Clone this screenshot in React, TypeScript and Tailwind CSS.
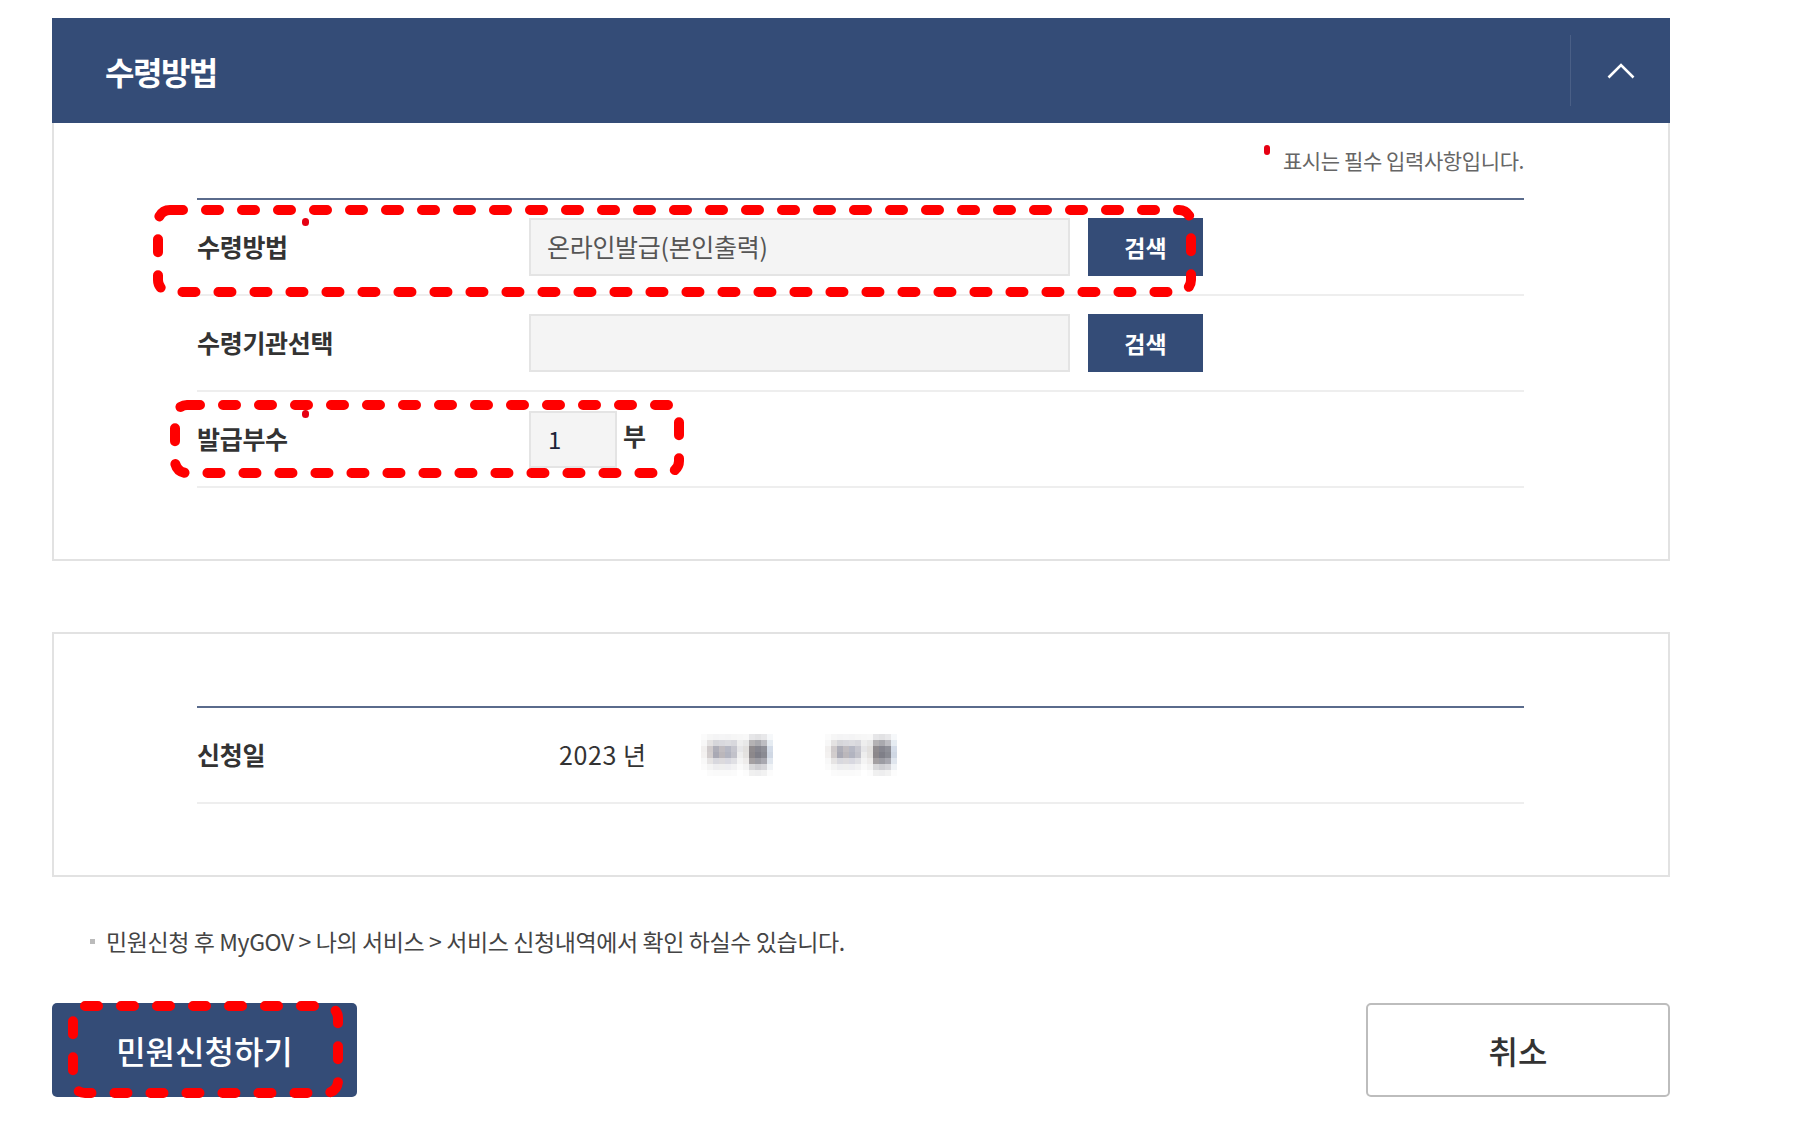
import React from "react";

function ReqDot() {
  return <span className="absolute left-[105px] top-[18px] h-[8px] w-[7px] rounded-full bg-[#e60012]" />;
}

function SearchButton() {
  return (
    <button className="ml-[18px] flex h-[58px] w-[115px] items-center justify-center bg-[#344c77] text-[23px] font-bold text-white">
      검색
    </button>
  );
}

const MOSAIC: string[][] = [
  ["bg-[#fbfbfb]", "bg-[#f6f6f6]", "bg-[#f4f4f5]", "bg-[#f5f5f6]", "bg-[#f4f4f5]", "bg-[#f6f6f6]", "bg-[#f7f7f7]", "bg-[#f8f8f8]", "bg-[#e6e6e8]", "bg-[#e2e2e4]", "bg-[#e8e8ea]", "bg-[#f6f8fa]"],
  ["bg-[#f7f7f7]", "bg-[#e4e2e2]", "bg-[#d6d6da]", "bg-[#d9d9de]", "bg-[#dcdce0]", "bg-[#d8d8dd]", "bg-[#eeeeee]", "bg-[#e8e8e8]", "bg-[#b4b2b4]", "bg-[#a9a9ae]", "bg-[#bdbdc2]", "bg-[#e6ecf2]"],
  ["bg-[#f1efee]", "bg-[#cfcacb]", "bg-[#aeaeb8]", "bg-[#c0bcc0]", "bg-[#b6b8c4]", "bg-[#c6c6ce]", "bg-[#e6e6e8]", "bg-[#e2e0de]", "bg-[#8f8b8e]", "bg-[#86868f]", "bg-[#8f9098]", "bg-[#d4dce8]"],
  ["bg-[#f3f1f0]", "bg-[#d2cdcd]", "bg-[#a9a9b4]", "bg-[#bbb7bb]", "bg-[#b2b4c0]", "bg-[#c2c2ca]", "bg-[#eeeeee]", "bg-[#e4e2e0]", "bg-[#8c888b]", "bg-[#7f7f88]", "bg-[#8a8b93]", "bg-[#d0d8e4]"],
  ["bg-[#f8f8f8]", "bg-[#e6e4e4]", "bg-[#d8d8de]", "bg-[#dcdadd]", "bg-[#d8d8e0]", "bg-[#e0e0e4]", "bg-[#f4f4f4]", "bg-[#eeeceb]", "bg-[#a4a0a2]", "bg-[#9c9ca3]", "bg-[#a8a8b0]", "bg-[#e0e6ee]"],
  ["bg-[#fbfbfb]", "bg-[#f4f4f4]", "bg-[#eeeef0]", "bg-[#efefef]", "bg-[#eeeef1]", "bg-[#f2f2f3]", "bg-[#fafafa]", "bg-[#f4f4f4]", "bg-[#d8d8da]", "bg-[#cfcfd3]", "bg-[#d6d6da]", "bg-[#f0f3f6]"],
  ["bg-[#ffffff]", "bg-[#fbfbfb]", "bg-[#fafafa]", "bg-[#fafafa]", "bg-[#fafafa]", "bg-[#fbfbfb]", "bg-[#ffffff]", "bg-[#fcfcfc]", "bg-[#f0f0f0]", "bg-[#eeeeef]", "bg-[#f2f2f2]", "bg-[#fcfcfc]"],
];

function Mosaic() {
  return (
    <div className="flex flex-col">
      {MOSAIC.map((row, r) => (
        <div key={r} className="flex">
          {row.map((c, i) => (
            <span key={i} className={`h-[6px] w-[6px] ${c}`} />
          ))}
        </div>
      ))}
    </div>
  );
}

export default function App() {
  return (
    <div className="relative min-h-[1146px] w-full bg-white font-['Noto_Sans_CJK_KR','Noto_Sans',sans-serif] text-[#333]">
      <div className="ml-[52px] w-[1618px] pt-[18px]">
        {/* Panel 1 */}
        <section>
          <div className="flex h-[105px] items-center bg-[#344c77]">
            <h2 className="flex-1 pl-[53px] text-[32px] font-bold tracking-[-1.5px] text-white">수령방법</h2>
            <div className="flex h-[71px] w-[100px] items-center justify-center border-l border-[#4a5f86]">
              <svg width="28" height="16" viewBox="0 0 28 16">
                <polyline points="1.5,14.5 14,2 26.5,14.5" fill="none" stroke="white" strokeWidth="2.6" />
              </svg>
            </div>
          </div>
          <div className="border-x-2 border-b-2 border-[#e2e2e2] pb-[71px] pl-[143px] pr-[144px] pt-[26px]">
            <div className="mb-[25px] flex h-[24px] items-center justify-end">
              <span className="mr-[13px] h-[10px] w-[6px] -translate-y-[4px] self-start rounded-full bg-[#e60012]" />
              <span className="text-[21px] tracking-[-0.4px] text-[#666]">표시는 필수 입력사항입니다.</span>
            </div>
            <div className="border-t-2 border-[#5a6b8c]">
              <div className="relative flex h-[96px] items-center border-b-2 border-[#eeeeee]">
                <div className="w-[332px] text-[25px] font-bold tracking-[-0.3px] text-[#333]">수령방법</div>
                <ReqDot />
                <div className="flex h-[58px] w-[541px] items-center border-2 border-[#e4e4e4] bg-[#f4f4f4] px-[16px] text-[25px] tracking-[-0.3px] text-[#555]">
                  온라인발급(본인출력)
                </div>
                <SearchButton />
              </div>
              <div className="relative flex h-[96px] items-center border-b-2 border-[#eeeeee]">
                <div className="w-[332px] text-[25px] font-bold tracking-[-0.3px] text-[#333]">수령기관선택</div>
                <div className="h-[58px] w-[541px] border-2 border-[#e4e4e4] bg-[#f4f4f4]" />
                <SearchButton />
              </div>
              <div className="relative flex h-[96px] items-center border-b-2 border-[#eeeeee]">
                <div className="w-[332px] text-[25px] font-bold tracking-[-0.3px] text-[#333]">발급부수</div>
                <ReqDot />
                <div className="flex h-[57px] w-[88px] items-center border-2 border-[#e4e4e4] bg-[#f4f4f4] pl-[17px] text-[24px] text-[#1d2238]">
                  1
                </div>
                <span className="mb-[6px] ml-[6px] text-[25px] font-bold text-[#333]">부</span>
              </div>
            </div>
          </div>
        </section>

        {/* Panel 2 */}
        <section className="mt-[71px] border-2 border-[#e2e2e2] pb-[71px] pl-[143px] pr-[144px] pt-[72px]">
          <div className="border-t-2 border-[#5a6b8c]">
            <div className="flex h-[96px] items-center border-b-2 border-[#eeeeee]">
              <div className="w-[332px] text-[25px] font-bold tracking-[-0.3px] text-[#333]">신청일</div>
              <div className="flex items-center pl-[30px] text-[25px] tracking-[0.6px] text-[#333]">
                <span>2023 년</span>
                <span className="ml-[54px]"><Mosaic /></span>
                <span className="ml-[52px]"><Mosaic /></span>
              </div>
            </div>
          </div>
        </section>

        {/* Footnote */}
        <div className="mt-[49px] flex items-center pl-[38px]">
          <span className="h-[5px] w-[5px] bg-[#bbbbbb]" />
          <span className="ml-[11px] text-[23px] leading-[30px] tracking-[-0.4px] text-[#444]">
            민원신청 후 MyGOV &gt; 나의 서비스 &gt; 서비스 신청내역에서 확인 하실수 있습니다.
          </span>
        </div>

        {/* Buttons */}
        <div className="mt-[47px] flex justify-between">
          <button className="flex h-[94px] w-[305px] items-center justify-center rounded-[5px] bg-[#344c77] text-[32px] font-medium text-white">
            민원신청하기
          </button>
          <button className="flex h-[94px] w-[304px] items-center justify-center rounded-[5px] border-2 border-[#bdbdbd] bg-white text-[32px] font-medium text-[#333]">
            취소
          </button>
        </div>
      </div>

      {/* Red dashed annotation boxes */}
      <svg className="pointer-events-none absolute left-[153px] top-[205px]" width="1043" height="92">
        <rect x="5" y="5" width="1033" height="82" rx="12" fill="none" stroke="#ff0000" strokeWidth="10" strokeDasharray="13 23" strokeLinecap="round" />
      </svg>
      <svg className="pointer-events-none absolute left-[170px] top-[400px]" width="514" height="78">
        <rect x="5" y="5" width="504" height="68" rx="12" fill="none" stroke="#ff0000" strokeWidth="10" strokeDasharray="13 23" strokeLinecap="round" />
      </svg>
      <svg className="pointer-events-none absolute left-[68px] top-[1001px]" width="275" height="97">
        <rect x="5" y="5" width="265" height="87" rx="12" fill="none" stroke="#ff0000" strokeWidth="10" strokeDasharray="13 23" strokeLinecap="round" />
      </svg>
    </div>
  );
}
